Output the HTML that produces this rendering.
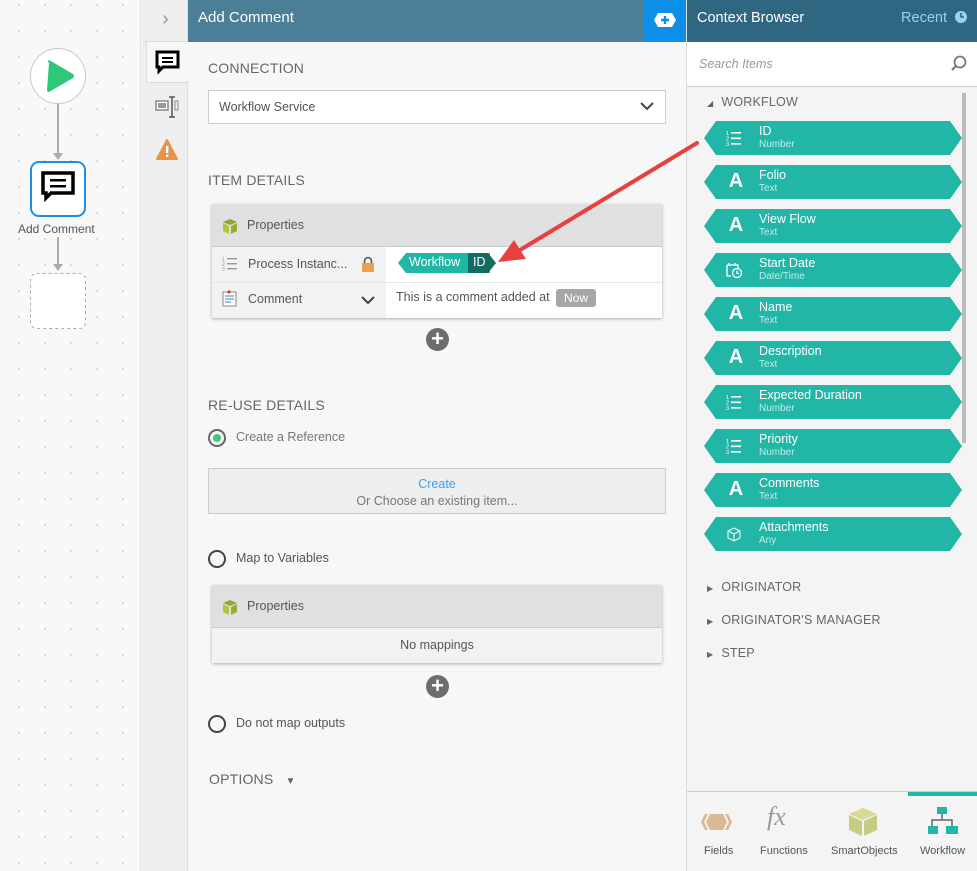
<!DOCTYPE html>
<html><head><style>
*{box-sizing:border-box;margin:0;padding:0}
body{width:977px;height:871px;overflow:hidden;font-family:"Liberation Sans",sans-serif;background:#f7f7f7;position:relative;color:#555}
.abs{position:absolute}
.canvas{left:0;top:0;width:141px;height:871px;background-color:#f8f8f8;background-image:radial-gradient(#cfcfcf 0.8px,transparent 1px);background-size:26px 26px;background-position:6px 18px;border-right:1px solid #e2e2e2}
.rail{left:142px;top:0;width:46px;height:871px;background:#efefef;border-right:1px solid #e0e0e0}
.hdr{left:188px;top:0;width:455px;height:42px;background:#4a7f97;color:#fff;font-size:15px;line-height:36px;padding-left:10px}
.sec{font-size:14px;color:#666;letter-spacing:.2px}
.rp{left:686px;top:0;width:291px;height:871px;background:#f4f4f4;border-left:1px solid #ddd}
.item{position:absolute;left:17px;width:258px;height:34px;background:#22b6a7;clip-path:polygon(12px 0,calc(100% - 12px) 0,100% 50%,calc(100% - 12px) 100%,12px 100%,0 50%);color:#fff}
.item .t{position:absolute;left:55px;top:3px;font-size:12.5px}
.item .s{position:absolute;left:55px;top:18px;font-size:10px;color:#bdeee8}
.item .ic{position:absolute;left:22px;top:5px;font-size:20px;font-weight:bold;width:20px;text-align:center}
.item svg{position:absolute;left:22px;top:9px}
.grp{position:absolute;left:20px;font-size:12.5px;color:#666;letter-spacing:.2px}
.radio{position:absolute;width:18px;height:18px;border:2px solid #444;border-radius:50%}
.plus{position:absolute;width:23px;height:23px;border-radius:50%;background:#6d6d6d;color:#fff;font-size:22px;line-height:22px;text-align:center;font-weight:bold}
</style></head><body>
<svg width="0" height="0" style="position:absolute"><defs>
<g id="nl" fill="#fff"><text x="0" y="5" font-size="5.5" font-family="Liberation Sans">1</text><text x="0" y="10.5" font-size="5.5" font-family="Liberation Sans">2</text><text x="0" y="16" font-size="5.5" font-family="Liberation Sans">3</text><rect x="5" y="2" width="10" height="1.6"/><rect x="5" y="7.5" width="10" height="1.6"/><rect x="5" y="13" width="10" height="1.6"/></g>
</defs></svg>
<div class="abs canvas"></div>
<svg class="abs" style="left:0;top:0" width="141" height="340">
<circle cx="58" cy="76" r="27.5" fill="#fff" stroke="#c8c8c8"/>
<path d="M49 63 Q47 61 49 60 L73 74 Q75 76 73 78 L49 92 Q47 92 47 90 Z" fill="#2ec87a"/>
<line x1="58" y1="104" x2="58" y2="156" stroke="#aaa" stroke-width="2"/>
<path d="M53 153 L63 153 L58 160Z" fill="#aaa"/>
<rect x="31" y="162" width="54" height="54" rx="8" fill="#fff" stroke="#1a8fe8" stroke-width="2"/>
<path d="M43 173 h30 v20 h-22 l-5 5 v-5 h-3 z" fill="#fff" stroke="#000" stroke-width="3.5"/>
<rect x="50" y="179" width="16" height="2.5"/><rect x="50" y="185" width="16" height="2.5"/>
<line x1="58" y1="237" x2="58" y2="266" stroke="#aaa" stroke-width="2"/>
<path d="M53 264 L63 264 L58 271Z" fill="#aaa"/>
<rect x="30.5" y="273.5" width="55" height="55" rx="6" fill="#fff" stroke="#aaa" stroke-dasharray="3 3"/>
</svg>
<div class="abs" style="left:18px;top:222px;font-size:12px;color:#555">Add Comment</div>

<div class="abs rail"></div>
<div class="abs" style="left:143px;top:0;width:45px;height:42px;border-bottom:1px solid #ddd;color:#999;font-size:20px;text-align:center;line-height:38px">&#x203A;</div>
<div class="abs" style="left:146px;top:41px;width:43px;height:42px;background:#f7f7f7;border:1px solid #ddd;border-right:none"></div>
<svg class="abs" style="left:155px;top:50px" width="28" height="26"><path d="M2 2 h21 v15 h-15 l-4 4 v-4 h-2z" fill="#fff" stroke="#000" stroke-width="3"/><rect x="7" y="7" width="11" height="2"/><rect x="7" y="11" width="11" height="2"/></svg>
<svg class="abs" style="left:155px;top:96px" width="26" height="22"><rect x="1" y="5" width="12" height="9" fill="#fff" stroke="#888" stroke-width="1.5"/><rect x="3" y="7" width="8" height="5" fill="#999"/><path d="M17 1v20M14 1h6M14 21h6" stroke="#555" stroke-width="1.5"/><rect x="20" y="5" width="3" height="9" fill="none" stroke="#888"/></svg>
<svg class="abs" style="left:155px;top:138px" width="24" height="24"><path d="M12 2 L22 21 H2Z" fill="#e6944a" stroke="#e6944a" stroke-linejoin="round" stroke-width="2"/><rect x="11" y="8" width="2.4" height="7" fill="#fff"/><rect x="11" y="16.5" width="2.4" height="2.4" fill="#fff"/></svg>

<div class="abs hdr">Add Comment</div>
<div class="abs" style="left:643px;top:0;width:43px;height:42px;background:#0b8fe9"></div>
<svg class="abs" style="left:653px;top:12px" width="24" height="16"><path d="M5 1h14l4 7-4 7H5L1 8z" fill="#fff"/><path d="M12 4v8M8 8h8" stroke="#0b8fe9" stroke-width="2.4"/></svg>

<div class="abs sec" style="left:208px;top:60px">CONNECTION</div>
<div class="abs" style="left:208px;top:90px;width:458px;height:34px;background:#fff;border:1px solid #ccc;font-size:12.5px;line-height:32px;padding-left:10px;color:#555">Workflow Service</div>
<svg class="abs" style="left:640px;top:101px" width="14" height="10"><path d="M1 2l6 6 6-6" stroke="#444" stroke-width="2" fill="none"/></svg>

<div class="abs sec" style="left:208px;top:172px">ITEM DETAILS</div>
<div class="abs" style="left:212px;top:204px;width:450px;height:114px;box-shadow:0 1px 3px rgba(0,0,0,.3);background:#fff">
 <div style="height:43px;background:#e0e0e0;border-bottom:1px solid #ccc;font-size:12.5px;line-height:43px;padding-left:35px;color:#555">Properties</div>
 <div style="position:absolute;left:0;top:43px;width:174px;height:71px;background:#f2f2f2"></div>
 <div style="position:absolute;left:0;top:78px;width:450px;border-top:1px solid #e5e5e5"></div>
 <div style="position:absolute;left:36px;top:53px;font-size:12.5px;color:#555">Process Instanc...</div>
 <div style="position:absolute;left:36px;top:88px;font-size:12.5px;color:#555">Comment</div>
 <div style="position:absolute;left:184px;top:86px;font-size:12.5px;color:#555">This is a comment added at</div>
 <div style="position:absolute;left:344px;top:85px;width:40px;height:18px;background:#a6a6a6;color:#fff;border-radius:3px;font-size:12px;text-align:center;line-height:18px">Now</div>
</div>
<svg class="abs" style="left:222px;top:218px" width="16" height="16"><path d="M1 4l7-3 7 3-7 3z" fill="#8aaa2e"/><path d="M1 5l6 3v8l-6-3z" fill="#b5c33a"/><path d="M15 5l-6 3v8l6-3z" fill="#96ad34"/></svg>
<svg class="abs" style="left:222px;top:256px" width="16" height="16" fill="#999"><text x="0" y="5" font-size="5">1</text><text x="0" y="10" font-size="5">2</text><text x="0" y="15" font-size="5">3</text><rect x="5" y="2" width="10" height="1.4"/><rect x="5" y="7" width="10" height="1.4"/><rect x="5" y="12" width="10" height="1.4"/></svg>
<svg class="abs" style="left:361px;top:256px" width="14" height="17"><path d="M3.5 7V5a3.5 3.5 0 017 0v2" stroke="#555" stroke-width="1.6" fill="none"/><rect x="1" y="7" width="12" height="9" rx="1" fill="#e8a04c"/></svg>
<svg class="abs" style="left:222px;top:290px" width="16" height="18"><rect x="1" y="2" width="13" height="14" fill="#fff" stroke="#888"/><path d="M3 6h9M3 9h9M3 12h6" stroke="#3a7fbf"/><circle cx="7" cy="2" r="1.6" fill="#d33"/></svg>
<svg class="abs" style="left:361px;top:295px" width="14" height="10"><path d="M1 2l6 6 6-6" stroke="#444" stroke-width="2" fill="none"/></svg>
<div class="abs" style="left:398px;top:253px;width:92px;height:20px;background:#22b6a7;clip-path:polygon(8px 0,100% 0,100% 100%,8px 100%,0 50%)"></div>
<div class="abs" style="left:468px;top:253px;width:28px;height:20px;background:#146c63;clip-path:polygon(0 0,20px 0,100% 50%,20px 100%,0 100%)"></div>
<div class="abs" style="left:409px;top:255px;font-size:12.5px;color:#fff">Workflow</div>
<div class="abs" style="left:473px;top:255px;font-size:12.5px;color:#fff">ID</div>
<div class="plus" style="left:426px;top:328px">+</div>

<div class="abs sec" style="left:208px;top:397px">RE-USE DETAILS</div>
<div class="radio" style="left:208px;top:429px;border-color:#666"></div>
<div class="abs" style="left:213px;top:434px;width:8px;height:8px;border-radius:50%;background:#46c47a"></div>
<div class="abs" style="left:236px;top:430px;font-size:12.5px;color:#777">Create a Reference</div>
<div class="abs" style="left:208px;top:468px;width:458px;height:46px;background:#eee;border:1px solid #ccc;text-align:center;font-size:12.5px;color:#777;padding-top:7px;line-height:17px"><span style="color:#3aa3e8">Create</span><br>Or Choose an existing item...</div>
<div class="radio" style="left:208px;top:550px"></div>
<div class="abs" style="left:236px;top:551px;font-size:12.5px;color:#555">Map to Variables</div>
<div class="abs" style="left:212px;top:585px;width:450px;height:78px;box-shadow:0 1px 3px rgba(0,0,0,.3);background:#f2f2f2">
 <div style="height:43px;background:#e0e0e0;border-bottom:1px solid #ccc;font-size:12.5px;line-height:43px;padding-left:35px;color:#555">Properties</div>
 <div style="text-align:center;font-size:12.5px;line-height:34px;color:#555">No mappings</div>
</div>
<svg class="abs" style="left:222px;top:599px" width="16" height="16"><path d="M1 4l7-3 7 3-7 3z" fill="#8aaa2e"/><path d="M1 5l6 3v8l-6-3z" fill="#b5c33a"/><path d="M15 5l-6 3v8l6-3z" fill="#96ad34"/></svg>
<div class="plus" style="left:426px;top:675px">+</div>
<div class="radio" style="left:208px;top:715px"></div>
<div class="abs" style="left:236px;top:716px;font-size:12.5px;color:#555">Do not map outputs</div>
<div class="abs sec" style="left:209px;top:771px">OPTIONS <span style="font-size:10px;margin-left:8px">&#9660;</span></div>

<div class="abs rp">
 <div style="height:42px;background:#2f6682;color:#fff;font-size:14.5px;line-height:36px;padding-left:10px">Context Browser<span style="position:absolute;right:30px;color:#9cd0ee">Recent</span></div>
 <svg style="position:absolute;right:9px;top:10px" width="14" height="14"><circle cx="7" cy="7" r="6" fill="#9cd0ee"/><path d="M7 3v4h3" stroke="#2f6682" stroke-width="1.6" fill="none"/></svg>
 <div style="height:45px;background:#fff;border-bottom:1px solid #ccc;font-size:12.5px;font-style:italic;color:#999;line-height:44px;padding-left:12px">Search Items</div>
 <svg style="position:absolute;right:10px;top:55px" width="17" height="17"><circle cx="10" cy="7" r="5.5" stroke="#777" stroke-width="1.8" fill="none"/><path d="M6 11l-4 4" stroke="#777" stroke-width="2.2"/></svg>
 <div style="position:absolute;left:275px;top:93px;width:4px;height:350px;background:#bbb"></div>
 <div class="grp" style="top:95px"><span style="font-size:8px;margin-right:8px">&#9698;</span>WORKFLOW</div>
 <div class="item" style="top:121px"><svg width="16" height="17"><use href="#nl"/></svg><div class="t">ID</div><div class="s">Number</div></div>
 <div class="item" style="top:165px"><div class="ic">A</div><div class="t">Folio</div><div class="s">Text</div></div>
 <div class="item" style="top:209px"><div class="ic">A</div><div class="t">View Flow</div><div class="s">Text</div></div>
 <div class="item" style="top:253px"><svg width="18" height="17"><path d="M1 3h11v3M1 3v11h4M3 1v3M9 1v3" stroke="#fff" stroke-width="1.3" fill="none"/><circle cx="11" cy="11" r="4.5" stroke="#fff" stroke-width="1.3" fill="none"/><path d="M11 8.5v3h2" stroke="#fff" stroke-width="1.2" fill="none"/></svg><div class="t">Start Date</div><div class="s">Date/Time</div></div>
 <div class="item" style="top:297px"><div class="ic">A</div><div class="t">Name</div><div class="s">Text</div></div>
 <div class="item" style="top:341px"><div class="ic">A</div><div class="t">Description</div><div class="s">Text</div></div>
 <div class="item" style="top:385px"><svg width="16" height="17"><use href="#nl"/></svg><div class="t">Expected Duration</div><div class="s">Number</div></div>
 <div class="item" style="top:429px"><svg width="16" height="17"><use href="#nl"/></svg><div class="t">Priority</div><div class="s">Number</div></div>
 <div class="item" style="top:473px"><div class="ic">A</div><div class="t">Comments</div><div class="s">Text</div></div>
 <div class="item" style="top:517px"><svg width="16" height="17"><path d="M8 2l6 3v7l-6 3-6-3V5z M2 5l6 3 6-3 M8 8v7" stroke="#fff" stroke-width="1" fill="none"/></svg><div class="t">Attachments</div><div class="s">Any</div></div>
 <div class="grp" style="top:580px"><span style="font-size:8px;margin-right:8px">&#9654;</span>ORIGINATOR</div>
 <div class="grp" style="top:613px"><span style="font-size:8px;margin-right:8px">&#9654;</span>ORIGINATOR'S MANAGER</div>
 <div class="grp" style="top:646px"><span style="font-size:8px;margin-right:8px">&#9654;</span>STEP</div>
 <div style="position:absolute;left:0;top:791px;width:291px;height:80px;border-top:1px solid #ccc;background:#f4f4f4"></div>
 <div style="position:absolute;left:221px;top:792px;width:70px;height:4px;background:#22b6a7"></div>
 <svg style="position:absolute;left:13px;top:812px" width="33" height="20"><path d="M5 2h3l-4 8 4 8H5l-4-8z M28 2h-3l4 8-4 8h3l4-8z" fill="#d9b894"/><path d="M10 2h13l4 8-4 8H10l-4-8z" fill="#d9b894"/></svg>
 <div style="position:absolute;left:80px;top:802px;font-family:'Liberation Serif',serif;font-style:italic;font-size:26px;color:#999">fx</div>
 <svg style="position:absolute;left:160px;top:806px" width="32" height="32"><path d="M2 8l14-6 14 6-14 6z" fill="#d7d995"/><path d="M2 9l13 6v15L2 24z" fill="#c7cc82"/><path d="M30 9l-13 6v15l13-6z" fill="#c7cc82"/></svg>
 <svg style="position:absolute;left:240px;top:806px" width="32" height="32" fill="#22b6a7"><rect x="10" y="1" width="10" height="7"/><path d="M15 8v6M5 20v-6h20v6" stroke="#666" stroke-width="1.5" fill="none"/><rect x="1" y="20" width="10" height="8"/><rect x="19" y="20" width="12" height="8"/></svg>
 <div style="position:absolute;left:17px;top:845px;font-size:11px;color:#555">Fields</div>
 <div style="position:absolute;left:73px;top:845px;font-size:11px;color:#555">Functions</div>
 <div style="position:absolute;left:144px;top:845px;font-size:11px;color:#555">SmartObjects</div>
 <div style="position:absolute;left:233px;top:845px;font-size:11px;color:#555">Workflow</div>
</div>

<svg class="abs" style="left:0;top:0;pointer-events:none" width="977" height="871">
<line x1="697" y1="143" x2="520" y2="250" stroke="#e8403f" stroke-width="4" stroke-linecap="round"/>
<path d="M498 262 L514 240 L526 259 Z" fill="#e8403f"/>
</svg>
</body></html>
